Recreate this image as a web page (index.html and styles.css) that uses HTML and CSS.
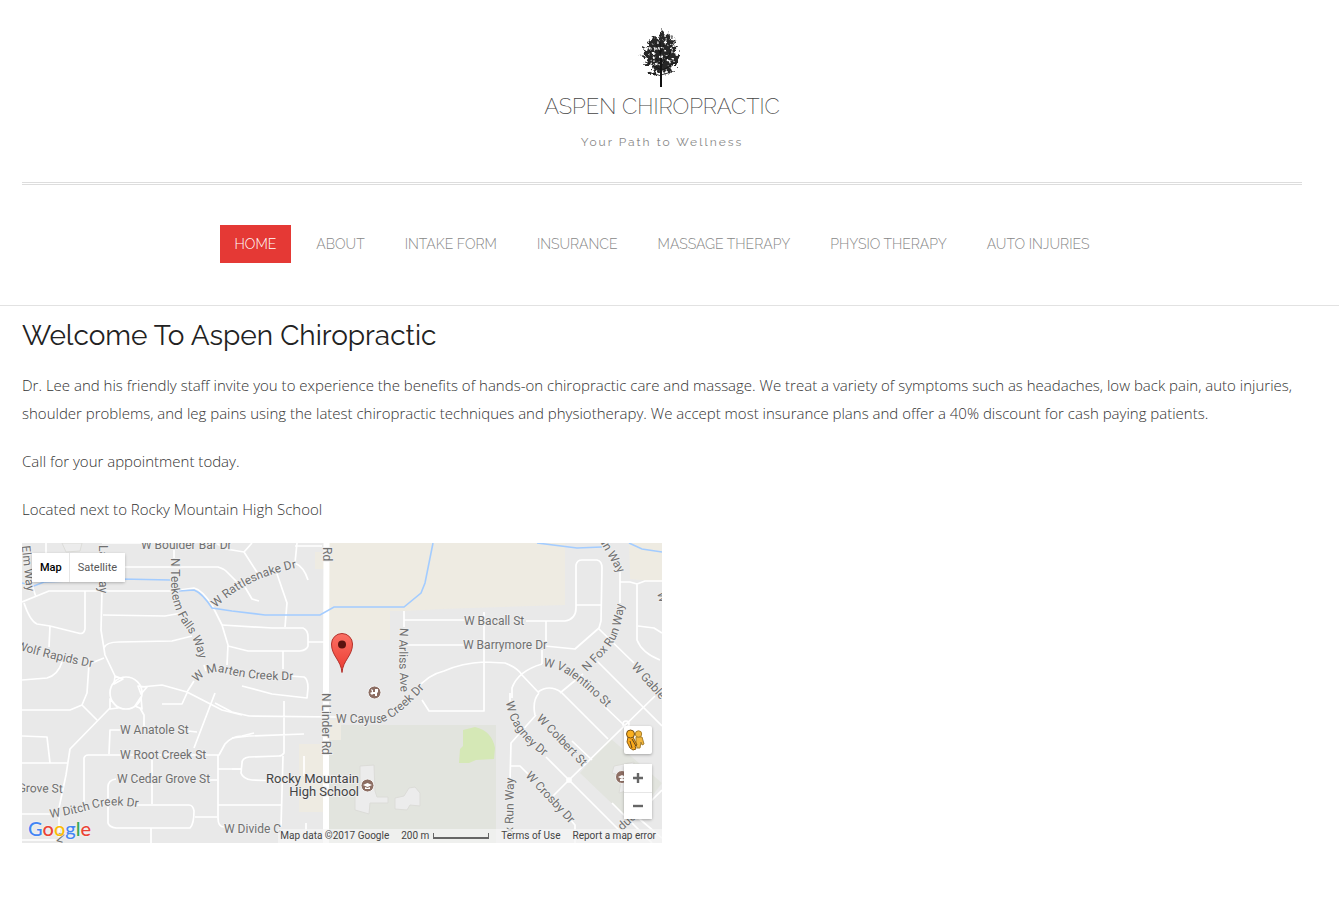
FILE: index.html
```html
<!DOCTYPE html>
<html lang="en">
<head>
<meta charset="utf-8">
<meta name="viewport" content="width=device-width, initial-scale=1">
<title>Aspen Chiropractic</title>
<link rel="stylesheet" href="styles.css">
</head>
<body>
<header class="site-header">
  <div class="brand">
    <a class="brand-link" href="#">
      <svg class="tree" viewBox="0 0 50 62" aria-hidden="true">
        <defs>
          <filter id="leaves" x="-10%" y="-10%" width="120%" height="120%">
            <feTurbulence type="fractalNoise" baseFrequency="0.26" numOctaves="3" seed="7" result="n"/>
            <feDisplacementMap in="SourceGraphic" in2="n" scale="9" xChannelSelector="R" yChannelSelector="G" result="d"/>
            <feColorMatrix in="n" type="matrix" values="0 0 0 0 0.02  0 0 0 0 0.02  0 0 0 0 0.02  0 0 6 0 -1.75" result="m"/>
            <feComposite in="m" in2="d" operator="in"/>
          </filter>
        </defs>
        <g filter="url(#leaves)">
          <path d="M25 2L29 6L34 5L33 11L39 12L38 18L41 22L38 25L44 28L39 33L40 38L34 38L37 44L30 43L28 47L24 41L20 47L14 48L10 45L17 41L15 37L7 37L10 32L3 27L8 25L5 19L11 19L10 14L16 13L14 8L21 8Z"/>
        </g>
        <g fill="none" stroke="#111">
          <path stroke-width="2" d="M24 59L24 30"/>
          <path stroke-width="0.8" d="M24 35L23 14M24 38L32 27L36 19M24 36L15 26L11 20M24 43L33 38L39 34M24 42L14 36L8 34M24 47L31 45M24 48L16 45M23 26L28 15M23 25L18 15"/>
        </g>
      </svg>
      <span class="brand-name">ASPEN CHIROPRACTIC</span>
    </a>
    <p class="tagline">Your Path to Wellness</p>
  </div>
  <nav class="main-nav" aria-label="Main">
    <a class="nav-link nav-current" href="#" aria-current="page">HOME</a>
    <a class="nav-link" href="#">ABOUT</a>
    <a class="nav-link" href="#">INTAKE FORM</a>
    <a class="nav-link" href="#">INSURANCE</a>
    <a class="nav-link" href="#">MASSAGE THERAPY</a>
    <a class="nav-link" href="#">PHYSIO THERAPY</a>
    <a class="nav-link" href="#">AUTO INJURIES</a>
  </nav>
</header>
<main class="content">
  <h1 class="title">Welcome To Aspen Chiropractic</h1>
  <p class="text">Dr. Lee and his friendly staff invite you to experience the benefits of hands-on chiropractic care and massage. We treat a variety of symptoms such as headaches, low back pain, auto injuries, shoulder problems, and leg pains using the latest chiropractic techniques and physiotherapy. We accept most insurance plans and offer a 40% discount for cash paying patients.</p>
  <p class="text">Call for your appointment today.</p>
  <p class="text">Located next to Rocky Mountain High School</p>
  <section class="map" aria-label="Map">
    <svg class="map-canvas" viewBox="0 0 640 300">
      <defs>
        <linearGradient id="pin" x1="0" y1="0" x2="0" y2="1"><stop offset="0" stop-color="#fb7064"/><stop offset="1" stop-color="#ea3a30"/></linearGradient>
        <path id="l-teek" d="M149 15L149 46Q152 70 164 85Q175 100 178 120"/>
        <path id="l-rattle" d="M194 65Q222 36 274 25"/>
        <path id="l-marten" d="M175 140Q186 126 202 130Q230 138 272 137"/>
        <path id="l-wolf" d="M-6 106Q30 117 74 125"/>
        <path id="l-ditch" d="M28 275Q55 271 73 265Q90 260 120 265"/>
        <path id="l-cayuse" d="M314 180L358 180Q374 177 408 139"/>
        <path id="l-arliss" d="M378 85Q376 110 379 155"/>
        <path id="l-valen" d="M521 123L535 126Q553 133 590 170"/>
        <path id="l-fox" d="M565 129L586 107Q601 90 602 56"/>
        <path id="l-cagney" d="M484 159Q488 192 530 219"/>
      </defs>
      <g class="sand">
        <path d="M307 0H543V62L420 66L382 68H368V97H307ZM607 0H640V39L608 36ZM293 9H302V26H293ZM307 177H319V197H307ZM277 201H303V269H277ZM307 280H348V300H307Z"/>
      </g>
      <path class="campus" d="M319 182H474V300H307V197H319ZM558 230L588 195L640 240L628 256L605 275Z"/>
      <path class="park" d="M441 187L453 184Q470 188 473 205L472 216L454 217L447 220L437 220L438 206L441 203Z"/>
      <path class="building" d="M338 223L352 222L353 248L355 254H366V260H348L347 271L333 267V247L338 245ZM373 255L382 253L387 245L393 244L398 250V263L388 262L385 267L373 266ZM592 223L612 219L608 247L597 250L600 233L590 230ZM40 0L60 0L58 8L44 9Z"/>
      <g class="roads">
        <path d="M24 0V12M80 0H124M100 24H196Q202 26 204 28L220 44M0 59L27 48H150L172 45Q180 47 190 62L200 82L206 102L205 122M63 48V86Q62 92 56 90L28 83L15 81Q8 78 2 60M28 83L27 104M14 54L10 42M80 48L79 87L83 112L93 133M81 72L143 73L160 70M82 105Q84 99 97 99L150 98L170 93M82 115L67 121L65 150L60 162L48 167H0M40 119Q36 132 25 135L0 137M152 0V15M182 122L184 128"/>
        <circle cx="104" cy="150" r="16"/>
        <path d="M93 133L101 136L92 141ZM116 143L125 144L119 151ZM88 156V166L96 165ZM119 154L113 163L120 166Z"/>
        <path d="M119 144L140 142L165 149L200 167L220 172M165 149L172 138M60 162L75 177M88 165L48 206L44 232L37 265V300M118 165L122 172V185M0 193L25 194L28 220M0 220H45M98 187H88L87 211M166 188L175 189M193 150L172 205M140 161H160L165 150M62 260V215Q63 212 66 212H197L203 201Q210 193 220 193L232 190M196 212V275Q196 284 202 284M196 226H220M188 237H195M196 262H260M173 274H195M130 213V261M94 236Q86 237 86 244V280Q87 284 94 285H168Q172 281 172 268Q171 262 167 262H114M129 285V300M0 271H30M0 297H37"/>
        <path d="M194 0L204 6L222 9L238 34M222 9L230 0M275 0L273 20Q282 24 286 37M273 3H300M254 28L265 60L263 84M220 39L230 56L237 58M200 82L250 85H281Q286 87 286 94V103Q285 107 278 108H226L206 103M286 99H304M261 108V126M268 133L282 134Q286 136 286 145L285 155L250 151L220 143M262 158V210Q260 213 257 213L227 214Q220 215 220 220L219 230Q221 236 230 237L260 238M210 169L227 173L315 174M210 195L227 193L282 191M210 226H219M261 213L259 284M282 213V233M284 280V290M210 169L193 160"/>
        <path d="M382 68V84M382 77H443M504 78H543Q554 76 554 65V22Q555 17 560 17L575 17Q580 18 580 25L579 78L577 85L553 106L523 103M554 62H579M524 78V98M520 107V121M385 102H442M462 69V168H407L400 157M394 147Q405 132 422 128Q440 120 462 119L483 120Q496 125 500 132L517 150M520 121Q496 128 490 145V155M577 86L612 120M598 26V60M598 39L608 39L615 41L623 38H640M615 41V97Q620 110 638 117M616 83L632 85L640 90M561 131L538 150M575 118L633 176M516 149Q527 141 539 149L586 196M488 150V160M517 150Q510 158 513 172M514 172L489 200L488 238M488 223L498 223L506 231M524 214L547 237L602 292M633 153L547 237L530 254M607 150L640 183M582 163L603 183M547 275L553 282V300M640 247L622 265M590 260L630 300M607 267L640 295M550 198L570 217"/>
        <circle cx="547" cy="237" r="2"/><circle cx="604" cy="181" r="3"/>
      </g>
      <path class="main-road" d="M304.500 0L304 150V300"/>
      <path class="water" d="M0 40L12 43L22 39L100 36L148 37M157 48L172 47Q180 50 190 65L210 68L243 72H298L312 64H382L399 50L403 40L411 0M515 0L555 5L580 4M607 0L620 6L640 9"/>
      <g class="labels">
        <text x="119" y="6">W Boulder Bar Dr</text>
        <text><textPath href="#l-teek">N Teekem Falls Way</textPath></text>
        <text><textPath href="#l-rattle">W Rattlesnake Dr</textPath></text>
        <text><textPath href="#l-marten">W Marten Creek Dr</textPath></text>
        <text><textPath href="#l-wolf">Wolf Rapids Dr</textPath></text>
        <text><textPath href="#l-ditch">W Ditch Creek Dr</textPath></text>
        <text><textPath href="#l-cayuse">W Cayuse Creek Dr</textPath></text>
        <text><textPath href="#l-arliss">N Arliss Ave</textPath></text>
        <text><textPath href="#l-valen">W Valentino St</textPath></text>
        <text><textPath href="#l-fox">N Fox Run Way</textPath></text>
        <text><textPath href="#l-cagney">W Cagney Dr</textPath></text>
        <text transform="translate(-1 -4) rotate(84)">r Elm Way</text>
        <text transform="translate(77 2) rotate(90)">La</text>
        <text transform="translate(77 38) rotate(90)">ay</text>
        <text transform="translate(301 4) rotate(90)">Rd</text>
        <text transform="translate(300 150) rotate(90)">N Linder Rd</text>
        <text x="98" y="191">W Anatole St</text>
        <text x="98" y="216">W Root Creek St</text>
        <text x="95" y="240">W Cedar Grove St</text>
        <text x="0" y="249" transform="rotate(1)">Grove St</text>
        <text x="202" y="290">W Divide C</text>
        <text x="442" y="82">W Bacall St</text>
        <text x="441" y="106">W Barrymore Dr</text>
        <text transform="translate(577 -3) rotate(60)">un Way</text>
        <text transform="translate(609 124) rotate(48)">W Gable</text>
        <text transform="translate(514 176) rotate(46)">W Colbert St</text>
        <text transform="translate(503 233) rotate(47)">W Crosby Dr</text>
        <text transform="translate(491 290) rotate(-89)">x Run Way</text>
        <text transform="translate(600 288) rotate(-42)">duca</text>
        <text transform="translate(34 298) rotate(15)">Z</text>
        <text transform="translate(635 50) rotate(75)">W</text>
        <text class="place" x="337" y="240">Rocky Mountain</text>
        <text class="place" x="337" y="253">High School</text>
      </g>
      <g class="poi">
        <circle cx="345.500" cy="242.500" r="6.500"/><circle cx="352.500" cy="149.500" r="6.500"/><circle cx="600" cy="234" r="6.500"/>
        <path d="M341 242L345.500 240L350 242L345.500 244ZM343 244L345.500 245L348 244V246H343ZM596 234L600 232L604 234L600 236ZM598 236H602V238H598ZM349 146L351 147V149H353V146H356V149L355 150V153H353V151H351L350 152L348 150L350 149Z"/>
      </g>
      <path class="pin" d="M320 129.500C319 117 309.500 113 309.500 101A10.500 10.500 0 0 1 330.500 101C330.500 113 321 117 320 129.500Z"/>
      <circle class="pin-dot" cx="320" cy="101.500" r="4"/>
    </svg>
    <div class="map-types">
      <button class="type-button type-on" type="button">Map</button>
      <button class="type-button" type="button">Satellite</button>
    </div>
    <div class="map-tools">
      <button class="tool pegman" type="button" aria-label="Street View">
        <svg class="pegman-icon" viewBox="0 0 24 24" aria-hidden="true">
          <path fill="#f3b63c" stroke="#a9812f" stroke-width="1" d="M12 9L18 9L20 16L18 17L17 14L16 20H13L12 15Z"/>
          <circle cx="14.500" cy="6" r="3.200" fill="#f3b63c" stroke="#a9812f"/>
          <path fill="#f9a91c" stroke="#8a5a10" stroke-width="1" d="M4 9L9 9L13 17L11 18L12 21L9 22L6 20L3 14Z"/>
          <circle cx="6.500" cy="6" r="4" fill="#fbb01f" stroke="#75501a"/>
          <path stroke="#5d431e" d="M8 11L12 18M6 13L8 20" fill="none"/>
        </svg>
      </button>
      <div class="zoom">
        <button class="tool" type="button" aria-label="Zoom in"><svg class="zoom-icon" viewBox="0 0 12 12"><path d="M6 1V11M1 6H11"/></svg></button>
        <button class="tool tool-out" type="button" aria-label="Zoom out"><svg class="zoom-icon" viewBox="0 0 12 12"><path d="M1 6H11"/></svg></button>
      </div>
    </div>
    <a class="google" href="#" aria-label="Google"><span class="g-blue">G</span><span class="g-red">o</span><span class="g-yellow">o</span><span class="g-blue">g</span><span class="g-green">l</span><span class="g-red">e</span></a>
    <div class="credits">
      <span>Map data ©2017 Google</span>
      <span class="scale">200 m <span class="scale-bar"></span></span>
      <a class="credit-link" href="#">Terms of Use</a>
      <a class="credit-link" href="#">Report a map error</a>
    </div>
  </section>
</main>
</body>
</html>
```

FILE: styles.css
```css
* { box-sizing: border-box; }

body {
  margin: 0;
  background: #fff;
  color: #333;
  font: 300 15px/28px "Open Sans", sans-serif;
}

.site-header {
  padding: 28px 37px 42px 22px;
  border-bottom: 1px solid #e2e2e2;
  font-family: Raleway, Lato, sans-serif;
}

.brand {
  display: flex;
  flex-direction: column;
  align-items: center;
  padding-bottom: 29px;
  border-bottom: 3px double #ddd;
}

.brand-link {
  display: flex;
  flex-direction: column;
  align-items: center;
  color: #444;
  text-decoration: none;
}

.tree { width: 50px; height: 62px; }

.brand-name {
  font-size: 22px;
  font-weight: 200;
  line-height: 32px;
}

.tagline {
  margin: 10px 0 0;
  color: #888;
  font-size: 12px;
  font-weight: 400;
  line-height: 21px;
  letter-spacing: 2px;
}

.main-nav {
  display: flex;
  flex-wrap: wrap;
  justify-content: center;
  gap: 10px;
  padding-top: 40px;
}

.nav-link {
  padding: 0 15px;
  color: #888;
  font-size: 14px;
  line-height: 38px;
  text-decoration: none;
}

.nav-current { background: #e53935; color: #fff; }

.content { padding: 10px 37px 40px 22px; }

.title {
  margin: 0 0 15px;
  color: #222;
  font: 400 28px/40px Raleway, Lato, sans-serif;
}

.text { margin: 0 0 20px; }

.map {
  position: relative;
  max-width: 640px;
  overflow: hidden;
  background: #e9e9e9;
  font-family: Roboto, sans-serif;
}

.map-canvas { display: block; width: 100%; }
.sand { fill: #eeebe2; }
.campus { fill: #e2e4de; }
.park { fill: #d5e8b6; }
.building { fill: #ececec; stroke: #dcdcd8; stroke-width: 1; }
.roads { fill: none; stroke: #fff; stroke-width: 1.7; stroke-linejoin: round; }
.main-road { fill: none; stroke: #fff; stroke-width: 6; }
.water { fill: none; stroke: #a3ccff; stroke-width: 1.6; }

.labels {
  fill: #707070;
  stroke: #eee;
  stroke-width: 2px;
  stroke-linejoin: round;
  paint-order: stroke;
  font-size: 12px;
  font-weight: 400;
}

.place { fill: #444; font-size: 13px; text-anchor: end; }
.poi circle { fill: #8d6e63; stroke: #f5f5f5; stroke-width: 1; }
.poi path { fill: #fff; }
.pin { fill: url(#pin); stroke: #b3312b; stroke-width: 1; }
.pin-dot { fill: #5b130f; }

.map-types {
  position: absolute;
  top: 10px;
  left: 10px;
  display: flex;
  border-radius: 2px;
  box-shadow: 0 1px 3px rgba(0, 0, 0, 0.25);
}

.type-button {
  padding: 0 8px;
  border: 0;
  background: #fff;
  color: #565656;
  font: 400 11px/29px Roboto, sans-serif;
}

.type-on {
  padding-right: 7px;
  border-right: 1px solid #e6e6e6;
  color: #000;
  font-weight: 500;
}

.map-tools {
  position: absolute;
  right: 10px;
  bottom: 24px;
  display: flex;
  flex-direction: column;
  gap: 10px;
}

.tool {
  display: grid;
  place-items: center;
  width: 28px;
  height: 28px;
  padding: 0;
  border: 0;
  background: #fff;
}

.pegman, .zoom {
  border-radius: 2px;
  box-shadow: 0 1px 3px rgba(0, 0, 0, 0.3);
}

.pegman { justify-items: start; }
.pegman-icon { width: 24px; height: 24px; }
.zoom { background: #fff; }
.tool-out { height: 27px; border-top: 1px solid #e6e6e6; }
.zoom-icon { width: 12px; height: 12px; stroke: #666; stroke-width: 2.4; }

.google {
  position: absolute;
  bottom: 3px;
  left: 6px;
  font: 500 20px/24px Lato, sans-serif;
  text-decoration: none;
  text-shadow: 0 0 2px #fff;
}

.g-blue { color: #4285f4; }
.g-red { color: #ea4335; }
.g-yellow { color: #fbbc05; }
.g-green { color: #34a853; }

.credits {
  position: absolute;
  right: 0;
  bottom: 0;
  display: flex;
  gap: 12px;
  padding: 0 6px 0 2px;
  background: rgba(245, 245, 245, 0.7);
  color: #444;
  font-size: 10px;
  font-weight: 400;
  line-height: 14px;
  white-space: nowrap;
}

.scale { display: flex; gap: 4px; align-items: center; }

.scale-bar {
  width: 56px;
  height: 6px;
  border: 2px solid #666;
  border-width: 0 1px 2px;
}

.credit-link { color: #444; text-decoration: none; }
```
